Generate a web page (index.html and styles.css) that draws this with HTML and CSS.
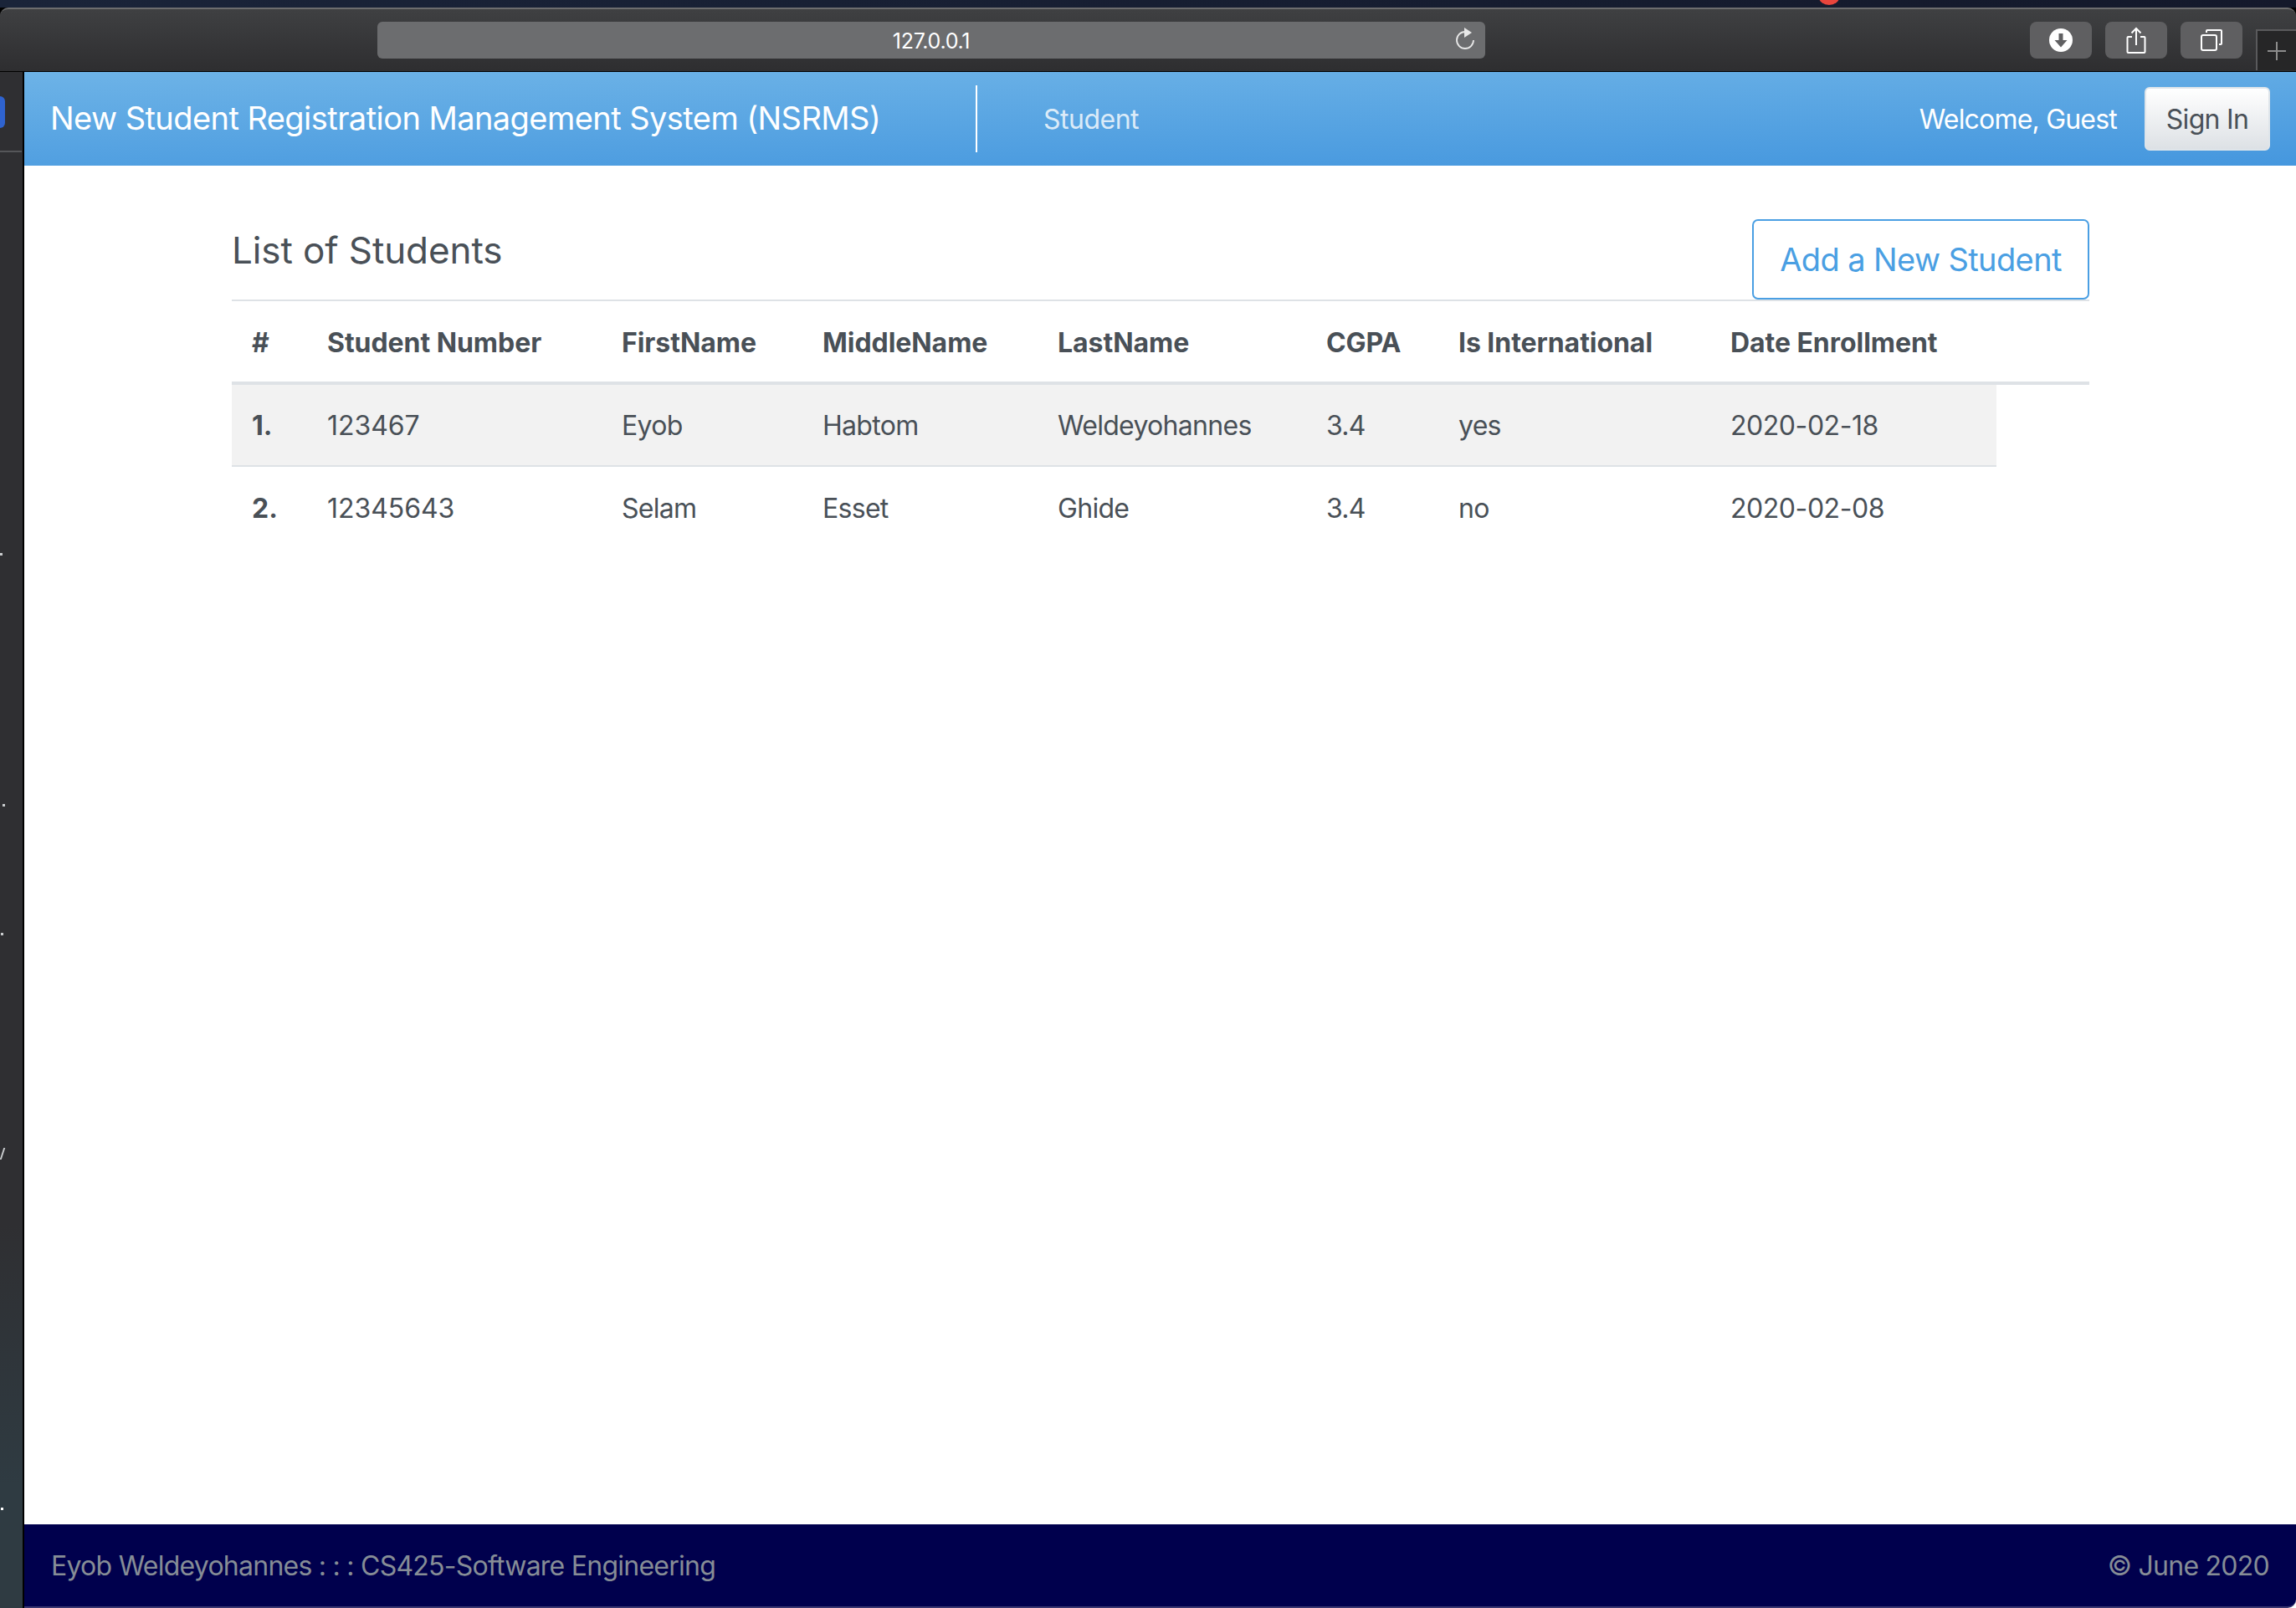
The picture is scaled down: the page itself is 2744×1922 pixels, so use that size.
FILE: index.html
```html
<!DOCTYPE html>
<html lang="en">
<head>
    <meta charset="UTF-8">
    <title>NSRMS - List of Students</title>
    <link rel="stylesheet" href="styles.css">
</head>
<body>
    <div class="menu-strip"><span class="menu-badge"></span></div>
    <header class="toolbar">
        <div class="address-bar">
            <span class="address-text">127.0.0.1</span>
            <svg class="reload-icon" width="24" height="30" viewBox="0 0 24 30" fill="none">
                <path d="M12 7a10 10 0 1 0 10 10" stroke="#e8e8e8" stroke-width="1.800"/>
                <path d="M11 2l9 6-9 6z" fill="#e8e8e8"/>
            </svg>
        </div>
        <div class="tool-buttons">
            <button class="tool-btn" type="button">
                <svg width="28" height="28" viewBox="0 0 28 28">
                    <circle cx="14" cy="14" r="14" fill="#fff"/>
                    <path d="M11.500 6h5v8h5L14 22.500 6.500 14h5z" fill="#606062"/>
                </svg>
            </button>
            <button class="tool-btn" type="button">
                <svg width="24" height="32" viewBox="0 0 24 32" fill="none" stroke="#fff" stroke-width="2">
                    <path d="M7 12H2.500a1 1 0 0 0-1 1v17a1 1 0 0 0 1 1h19a1 1 0 0 0 1-1V13a1 1 0 0 0-1-1H17"/>
                    <path d="M12 22V2M6.500 7.500 12 2l5.500 5.500"/>
                </svg>
            </button>
            <button class="tool-btn" type="button">
                <svg width="26" height="26" viewBox="0 0 26 26" fill="none" stroke="#fff" stroke-width="2">
                    <rect x="1" y="7" width="18" height="18" rx="2"/>
                    <path d="M7 4V2a1 1 0 0 1 1-1h16a1 1 0 0 1 1 1v15a1 1 0 0 1-1 1h-2"/>
                </svg>
            </button>
        </div>
        <div class="new-tab">
            <svg width="22" height="22" viewBox="0 0 22 22" stroke="#8c8c8c" stroke-width="2">
                <path d="M11 0v22M0 11h22"/>
            </svg>
        </div>
    </header>

    <div class="window">
        <aside class="sidebar">
            <span class="side-pill"></span>
            <span class="side-line"></span>
            <span class="side-dot side-dot-1"></span>
            <span class="side-dot side-dot-2"></span>
            <span class="side-dot side-dot-3"></span>
            <span class="side-dot side-dot-4"></span>
            <span class="side-dot side-dot-5"></span>
        </aside>

        <div class="page">
            <nav class="navbar">
                <a class="brand" href="#">New Student Registration Management System (NSRMS)</a>
                <a class="nav-link" href="#">Student</a>
                <span class="welcome">Welcome, Guest</span>
                <a class="btn-signin" href="#">Sign In</a>
            </nav>

            <main class="content">
                <div class="list-head">
                    <h1>List of Students</h1>
                    <a class="btn-add" href="#">Add a New Student</a>
                </div>
                <table class="students">
                    <colgroup>
                        <col class="col-num">
                        <col class="col-number">
                        <col class="col-first">
                        <col class="col-middle">
                        <col class="col-last">
                        <col class="col-cgpa">
                        <col class="col-intl">
                        <col class="col-date">
                        <col>
                    </colgroup>
                    <thead>
                        <tr>
                            <th>#</th>
                            <th>Student Number</th>
                            <th>FirstName</th>
                            <th>MiddleName</th>
                            <th>LastName</th>
                            <th>CGPA</th>
                            <th>Is International</th>
                            <th>Date Enrollment</th>
                            <th></th>
                        </tr>
                    </thead>
                    <tbody>
                        <tr>
                            <th>1.</th>
                            <td class="cell-number">123467</td>
                            <td>Eyob</td>
                            <td>Habtom</td>
                            <td>Weldeyohannes</td>
                            <td>3.4</td>
                            <td>yes</td>
                            <td class="cell-date">2020-02-18</td>
                        </tr>
                        <tr>
                            <th>2.</th>
                            <td class="cell-number">12345643</td>
                            <td>Selam</td>
                            <td>Esset</td>
                            <td>Ghide</td>
                            <td>3.4</td>
                            <td>no</td>
                            <td class="cell-date">2020-02-08</td>
                        </tr>
                    </tbody>
                </table>
            </main>

            <footer class="footer">
                <span>Eyob Weldeyohannes : : : CS425-Software Engineering</span>
                <span>&copy; June 2020</span>
            </footer>
        </div>
    </div>
</body>
</html>
```

FILE: styles.css
```css
:root {
    --blue: #4a9fe3;
    --text-color: #495057;
    --line-color: #dee2e6;
}

* {
    margin: 0;
    padding: 0;
    box-sizing: border-box;
}

html, body {
    height: 100%;
}

body {
    font-family: Inter, "Liberation Sans", sans-serif;
    font-size: 32px;
    color: var(--text-color);
    background-color: #000;
    display: flex;
    flex-direction: column;
    overflow: hidden;
}

a {
    text-decoration: none;
}

/* mac chrome */
.menu-strip {
    height: 9px;
    flex: none;
    background: linear-gradient(to right, #1a2439, #14192b);
    position: relative;
    overflow: hidden;
}

.menu-badge {
    position: absolute;
    left: 2174px;
    top: -12px;
    width: 24px;
    height: 18px;
    border-radius: 50%;
    background-color: #e8453c;
}

.toolbar {
    height: 77px;
    flex: none;
    border-top: 2px solid #6d6d6e;
    border-bottom: 1px solid #000;
    border-radius: 10px 10px 0 0;
    background: linear-gradient(to bottom, #3f4042, #2e2e30);
    display: flex;
    align-items: flex-start;
    padding: 15px 0 0 451px;
}

.address-bar {
    width: 1324px;
    height: 44px;
    border-radius: 6px;
    background-color: #6c6d6f;
    color: #fff;
    font-size: 25px;
    display: flex;
    align-items: center;
    padding: 0 12px 0 0;
}

.address-text {
    flex: 1;
    padding: 2px 0 0 36px;
    text-align: center;
    letter-spacing: -0.3px;
}

.reload-icon {
    flex: none;
    margin-top: -4px;
}

.tool-buttons {
    display: flex;
    gap: 16px;
    margin-left: 651px;
}

.tool-btn {
    width: 74px;
    height: 44px;
    border: none;
    border-radius: 8px;
    background-color: #5f5f61;
    display: flex;
    align-items: center;
    justify-content: center;
}

.new-tab {
    flex: 1;
    display: flex;
    align-items: flex-start;
    height: 49px;
    margin: 9px 0 0 16px;
    background-color: #262627;
    border-left: 2px solid #5a5a5c;
    border-top: 2px solid #5a5a5c;
    padding: 13px 0 0 12px;
}

.window {
    flex: 1;
    display: flex;
    min-height: 0;
}

.sidebar {
    width: 29px;
    flex: none;
    position: relative;
    background: linear-gradient(to bottom, #2f2f32 75%, #2f3b42 92%);
    border-right: 2px solid #000;
}

.side-pill {
    position: absolute;
    left: 0;
    top: 29px;
    width: 6px;
    height: 38px;
    border-radius: 0 6px 6px 0;
    background-color: #2f63cf;
}

.side-line {
    position: absolute;
    left: 0;
    right: 1px;
    top: 94px;
    height: 2px;
    background-color: #555659;
}

.side-dot {
    position: absolute;
    left: 1px;
    width: 3px;
    height: 3px;
    background-color: #c9ccce;
}

.side-dot-1 { top: 575px; left: 0; }
.side-dot-2 { top: 875px; left: 3px; }
.side-dot-3 { top: 1029px; left: 1px; }
.side-dot-4 { top: 1286px; left: 2px; width: 2px; height: 14px; transform: skewX(-18deg); }
.side-dot-5 { top: 1716px; background-color: #fff; }

.page {
    flex: 1;
    display: flex;
    flex-direction: column;
    background-color: #fff;
    min-width: 0;
}

/* navbar */
.navbar {
    height: 112px;
    flex: none;
    background: linear-gradient(179deg, #6db3e7, #4597de);
    display: flex;
    align-items: center;
    padding: 0 31px 0 31px;
    color: #fff;
}

.brand {
    color: #fff;
    font-size: 38px;
    width: 1108px;
    height: 80px;
    line-height: 78px;
    border-right: 2px solid #fff;
    letter-spacing: -0.56px;
}

.nav-link {
    color: rgba(255, 255, 255, 0.8);
    margin-left: 79px;
    letter-spacing: -0.5px;
}

.welcome {
    margin-left: auto;
    margin-right: 33px;
    letter-spacing: -0.8px;
}

.btn-signin {
    width: 150px;
    height: 76px;
    line-height: 74px;
    text-align: center;
    border: 2px solid #dfe5ea;
    border-radius: 6px;
    color: var(--text-color);
    background: linear-gradient(to bottom, #fff, #dde1e5);
    letter-spacing: -0.7px;
}

/* main */
.content {
    flex: 1;
    padding: 64px 247px 0 248px;
}

.list-head {
    display: flex;
    justify-content: space-between;
    align-items: flex-start;
    height: 98px;
    border-bottom: 2px solid var(--line-color);
}

h1 {
    font-size: 44px;
    font-weight: 400;
    line-height: 1.2;
    margin-top: 11px;
    letter-spacing: -0.1px;
}

.btn-add {
    width: 403px;
    height: 96px;
    line-height: 92px;
    text-align: center;
    border: 2px solid var(--blue);
    border-radius: 7px;
    color: var(--blue);
    font-size: 38px;
    letter-spacing: -0.6px;
}

.students {
    width: 100%;
    table-layout: fixed;
    border-collapse: separate;
    border-spacing: 0;
}

.col-num { width: 90px; }
.col-number { width: 352px; }
.col-first { width: 240px; }
.col-middle { width: 281px; }
.col-last { width: 321px; }
.col-cgpa { width: 158px; }
.col-intl { width: 325px; }
.col-date { width: 342px; }

.students th,
.students td {
    padding: 0 0 0 24px;
    text-align: left;
    white-space: nowrap;
    height: 98px;
    font-size: 32px;
}

.students td {
    letter-spacing: -0.7px;
}

.students td.cell-number {
    letter-spacing: -0.05px;
}

.students td.cell-date {
    letter-spacing: -0.45px;
}

.students thead th {
    height: 100px;
    padding-top: 2px;
    font-weight: 700;
    letter-spacing: -0.05px;
    border-bottom: 4px solid var(--line-color);
}

.students tbody tr:first-child th,
.students tbody tr:first-child td {
    background-color: #f2f2f2;
    border-bottom: 2px solid var(--line-color);
}

/* footer */
.footer {
    height: 100px;
    flex: none;
    background-color: #00004d;
    border-bottom: 2px solid #3a3670;
    border-bottom-right-radius: 10px;
    color: #868d96;
    display: flex;
    justify-content: space-between;
    align-items: center;
    padding: 0 32px;
    letter-spacing: -0.75px;
}
```
